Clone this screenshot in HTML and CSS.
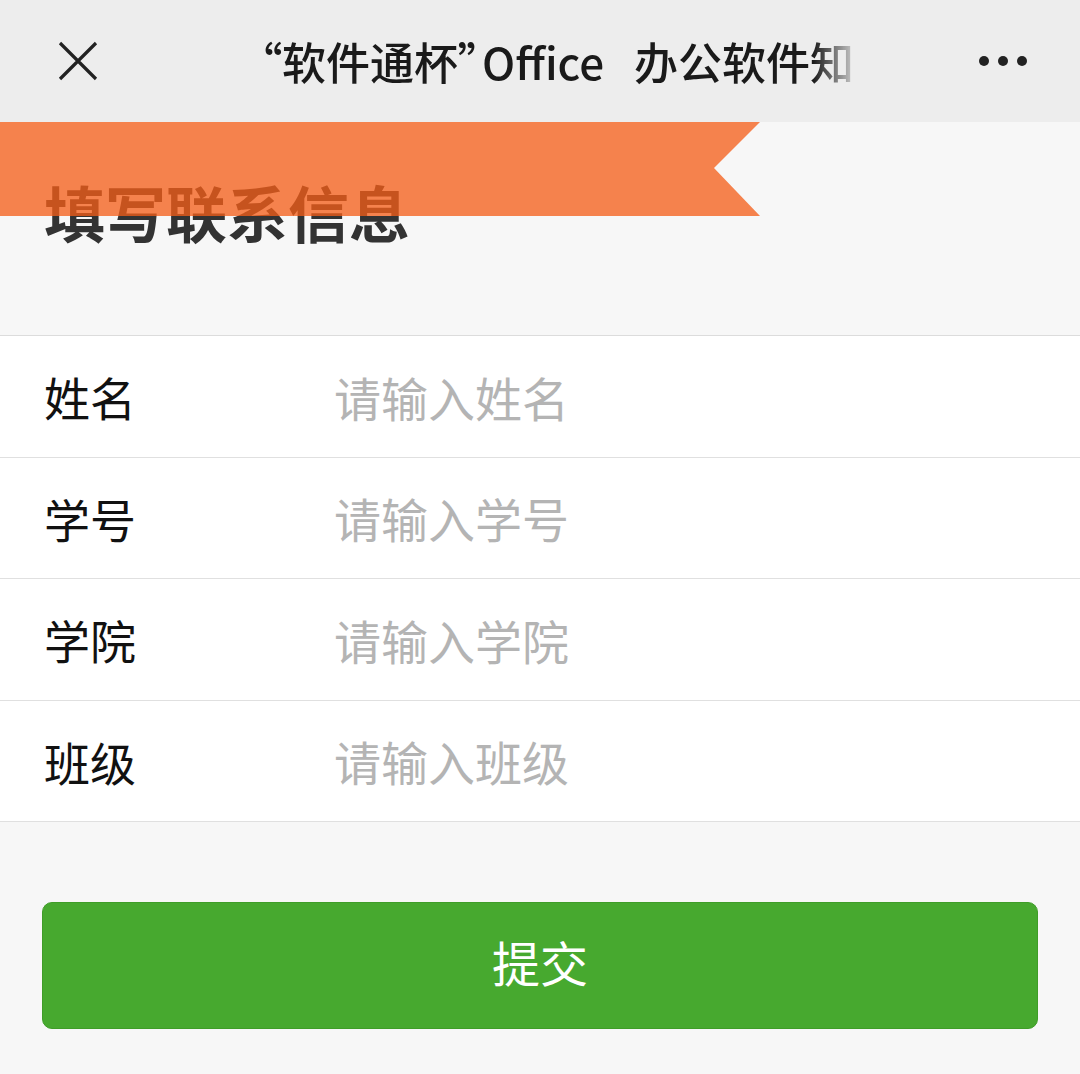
FILE: index.html
```html
<!DOCTYPE html>
<html>
<head>
	<meta charset="utf-8">
	<title>填写联系信息</title>
	<link rel="stylesheet" href="styles.css">
</head>
<body>
	<div class="topbar">
		<div class="close">
			<svg width="40" height="40" viewBox="0 0 40 40"><path d="M2 2 L38 38 M38 2 L2 38" stroke="#222" stroke-width="3.2" fill="none"/></svg>
		</div>
		<div class="title">“软件通杯”<span class="latin">Office</span>办公软件知</div>
		<div class="more"><span></span><span></span><span></span></div>
	</div>

	<div class="banner">
		<h1>填写联系信息</h1>
		<div class="ribbon"></div>
	</div>

	<form class="form">
		<div class="field">
			<label for="name">姓名</label>
			<input id="name" type="text" placeholder="请输入姓名">
		</div>
		<div class="field">
			<label for="sid">学号</label>
			<input id="sid" type="text" placeholder="请输入学号">
		</div>
		<div class="field">
			<label for="college">学院</label>
			<input id="college" type="text" placeholder="请输入学院">
		</div>
		<div class="field">
			<label for="klass">班级</label>
			<input id="klass" type="text" placeholder="请输入班级">
		</div>
	</form>

	<div class="actions">
		<button class="submit" type="button">提交</button>
	</div>
</body>
</html>
```

FILE: styles.css
```css
html, body { margin: 0; padding: 0; }
body {
	background: #f7f7f7;
	font-family: "Noto Sans CJK SC", "Noto Sans", sans-serif;
	color: #111;
	height: 1074px;
	overflow: hidden;
}

/* top bar */
.topbar {
	height: 122px;
	background: #ededed;
	display: flex;
	align-items: center;
}
.close { width: 192px; padding-left: 58px; display: flex; align-items: center; }
.close svg { display: block; }
.title {
	width: 602px;
	padding-left: 10px;
	font-size: 44px;
	font-weight: 500;
	color: #1a1a1a;
	white-space: nowrap;
	overflow: hidden;
	font-feature-settings: "palt";
	-webkit-mask-image: linear-gradient(to right, #000 92%, transparent 100%);
	mask-image: linear-gradient(to right, #000 92%, transparent 100%);
}
.title .latin { margin: 0 30px 0 2px; }
.more { flex: 1; display: flex; justify-content: flex-end; gap: 9px; padding-right: 53px; }
.more span { width: 10px; height: 10px; border-radius: 50%; background: #222; }

/* heading with ribbon */
.banner {
	position: relative;
	height: 213px;
	background: #f7f7f7;
	border-bottom: 1px solid #dcdcdc;
}
.banner h1 {
	margin: 0;
	padding: 59px 0 0 44px;
	font-size: 61px;
	line-height: 62px;
	font-weight: 700;
	color: #333;
}
.ribbon {
	position: absolute;
	top: 0;
	left: 0;
	width: 760px;
	height: 94px;
	background: rgba(244, 93, 24, 0.76);
	clip-path: polygon(0 0, 760px 0, 714px 46px, 760px 94px, 0 94px);
}

/* form rows */
.form { background: #fff; }
.field {
	height: 121.5px;
	box-sizing: border-box;
	border-bottom: 1px solid #e0e0e0;
	display: flex;
	align-items: center;
	padding-left: 44px;
}
.field label { width: 290px; font-size: 46px; color: #111; }
.field input {
	flex: 1;
	border: 0;
	outline: none;
	background: transparent;
	font-family: inherit;
	font-size: 47px;
	color: #111;
	padding: 0;
}
.field input::placeholder { color: #b4b4b4; }

/* submit */
.actions { padding: 80px 42px 0; }
.submit {
	width: 100%;
	height: 127px;
	padding: 0 0 10px;
	border: 1px solid #3f9d28;
	border-radius: 10px;
	background: #47a92f;
	color: #fff;
	font-family: inherit;
	font-size: 48px;
	cursor: pointer;
}
```
